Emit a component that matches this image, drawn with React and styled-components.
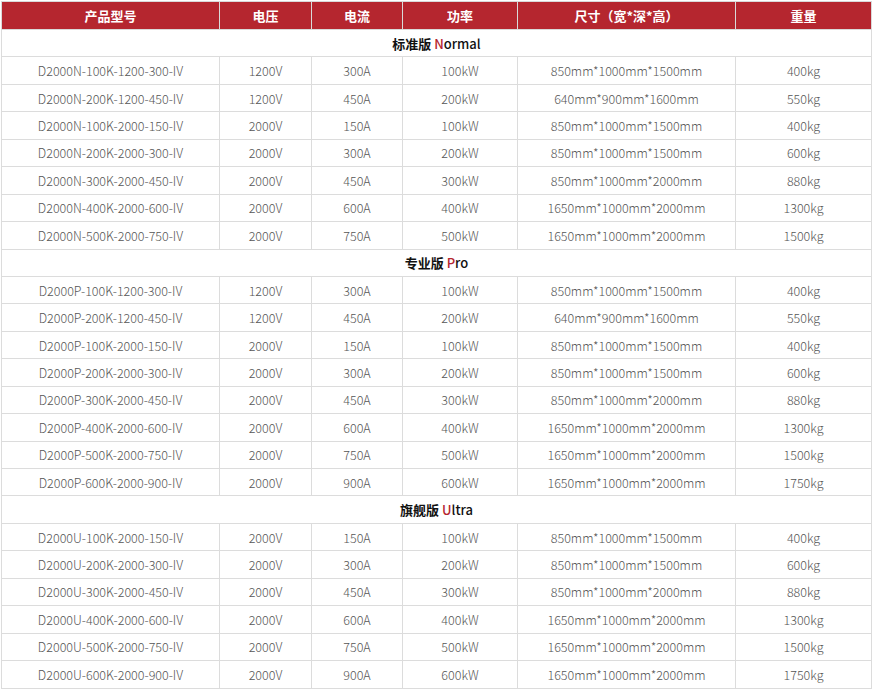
import React from "react";
import styled, { createGlobalStyle } from "styled-components";

const Global = createGlobalStyle`
  html, body { margin: 0; padding: 0; background: #fff; }
  body { font-family: "Noto Sans CJK SC", "Open Sans", sans-serif; }
`;

const Wrap = styled.div`
  padding: 1px 0 0 1px;
`;

const Table = styled.table`
  width: 871px;
  border-collapse: collapse;
  table-layout: fixed;
  border: 1px solid #d6d6d6;
`;

const HeadCell = styled.th`
  background: #b5262f;
  color: #fff;
  font-family: "Noto Sans CJK SC", sans-serif;
  font-weight: 700;
  font-size: 13px;
  height: 27px;
  padding: 0;
  border: 1px solid #d9d9d9;
  text-align: center;
  vertical-align: middle;
`;

const Cell = styled.td`
  color: #555;
  font-family: "Noto Sans CJK SC", sans-serif;
  font-weight: 300;
  font-size: 12.5px;
  height: 26.45px;
  padding: 0;
  border: 1px solid #dcdcdc;
  text-align: center;
  vertical-align: middle;
  white-space: nowrap;
`;

const SectionCell = styled(Cell)`
  color: #111;
  font-weight: 700;
  font-size: 13px;
`;

const English = styled.span`
  font-weight: 500;
`;

const Accent = styled.span`
  color: #b5262f;
`;

const widths = [218, 92, 91, 115, 218, 136];
const headers = ["产品型号", "电压", "电流", "功率", "尺寸（宽*深*高）", "重量"];

const sections = [
  {
    cn: "标准版",
    en: "Normal",
    rows: [
      ["D2000N-100K-1200-300-IV", "1200V", "300A", "100kW", "850mm*1000mm*1500mm", "400kg"],
      ["D2000N-200K-1200-450-IV", "1200V", "450A", "200kW", "640mm*900mm*1600mm", "550kg"],
      ["D2000N-100K-2000-150-IV", "2000V", "150A", "100kW", "850mm*1000mm*1500mm", "400kg"],
      ["D2000N-200K-2000-300-IV", "2000V", "300A", "200kW", "850mm*1000mm*1500mm", "600kg"],
      ["D2000N-300K-2000-450-IV", "2000V", "450A", "300kW", "850mm*1000mm*2000mm", "880kg"],
      ["D2000N-400K-2000-600-IV", "2000V", "600A", "400kW", "1650mm*1000mm*2000mm", "1300kg"],
      ["D2000N-500K-2000-750-IV", "2000V", "750A", "500kW", "1650mm*1000mm*2000mm", "1500kg"],
    ],
  },
  {
    cn: "专业版",
    en: "Pro",
    rows: [
      ["D2000P-100K-1200-300-IV", "1200V", "300A", "100kW", "850mm*1000mm*1500mm", "400kg"],
      ["D2000P-200K-1200-450-IV", "1200V", "450A", "200kW", "640mm*900mm*1600mm", "550kg"],
      ["D2000P-100K-2000-150-IV", "2000V", "150A", "100kW", "850mm*1000mm*1500mm", "400kg"],
      ["D2000P-200K-2000-300-IV", "2000V", "300A", "200kW", "850mm*1000mm*1500mm", "600kg"],
      ["D2000P-300K-2000-450-IV", "2000V", "450A", "300kW", "850mm*1000mm*2000mm", "880kg"],
      ["D2000P-400K-2000-600-IV", "2000V", "600A", "400kW", "1650mm*1000mm*2000mm", "1300kg"],
      ["D2000P-500K-2000-750-IV", "2000V", "750A", "500kW", "1650mm*1000mm*2000mm", "1500kg"],
      ["D2000P-600K-2000-900-IV", "2000V", "900A", "600kW", "1650mm*1000mm*2000mm", "1750kg"],
    ],
  },
  {
    cn: "旗舰版",
    en: "Ultra",
    rows: [
      ["D2000U-100K-2000-150-IV", "2000V", "150A", "100kW", "850mm*1000mm*1500mm", "400kg"],
      ["D2000U-200K-2000-300-IV", "2000V", "300A", "200kW", "850mm*1000mm*1500mm", "600kg"],
      ["D2000U-300K-2000-450-IV", "2000V", "450A", "300kW", "850mm*1000mm*2000mm", "880kg"],
      ["D2000U-400K-2000-600-IV", "2000V", "600A", "400kW", "1650mm*1000mm*2000mm", "1300kg"],
      ["D2000U-500K-2000-750-IV", "2000V", "750A", "500kW", "1650mm*1000mm*2000mm", "1500kg"],
      ["D2000U-600K-2000-900-IV", "2000V", "900A", "600kW", "1650mm*1000mm*2000mm", "1750kg"],
    ],
  },
];

export default function App() {
  return (
    <>
      <Global />
      <Wrap>
        <Table>
          <colgroup>
            {widths.map((w, i) => (
              <col key={i} style={{ width: w }} />
            ))}
          </colgroup>
          <thead>
            <tr>
              {headers.map((h) => (
                <HeadCell key={h}>{h}</HeadCell>
              ))}
            </tr>
          </thead>
          <tbody>
            {sections.map((s) => (
              <React.Fragment key={s.en}>
                <tr>
                  <SectionCell colSpan={6}>
                    {s.cn}{" "}
                    <English>
                      <Accent>{s.en[0]}</Accent>
                      {s.en.slice(1)}
                    </English>
                  </SectionCell>
                </tr>
                {s.rows.map((r) => (
                  <tr key={r[0]}>
                    {r.map((c, i) => (
                      <Cell key={i}>{c}</Cell>
                    ))}
                  </tr>
                ))}
              </React.Fragment>
            ))}
          </tbody>
        </Table>
      </Wrap>
    </>
  );
}
